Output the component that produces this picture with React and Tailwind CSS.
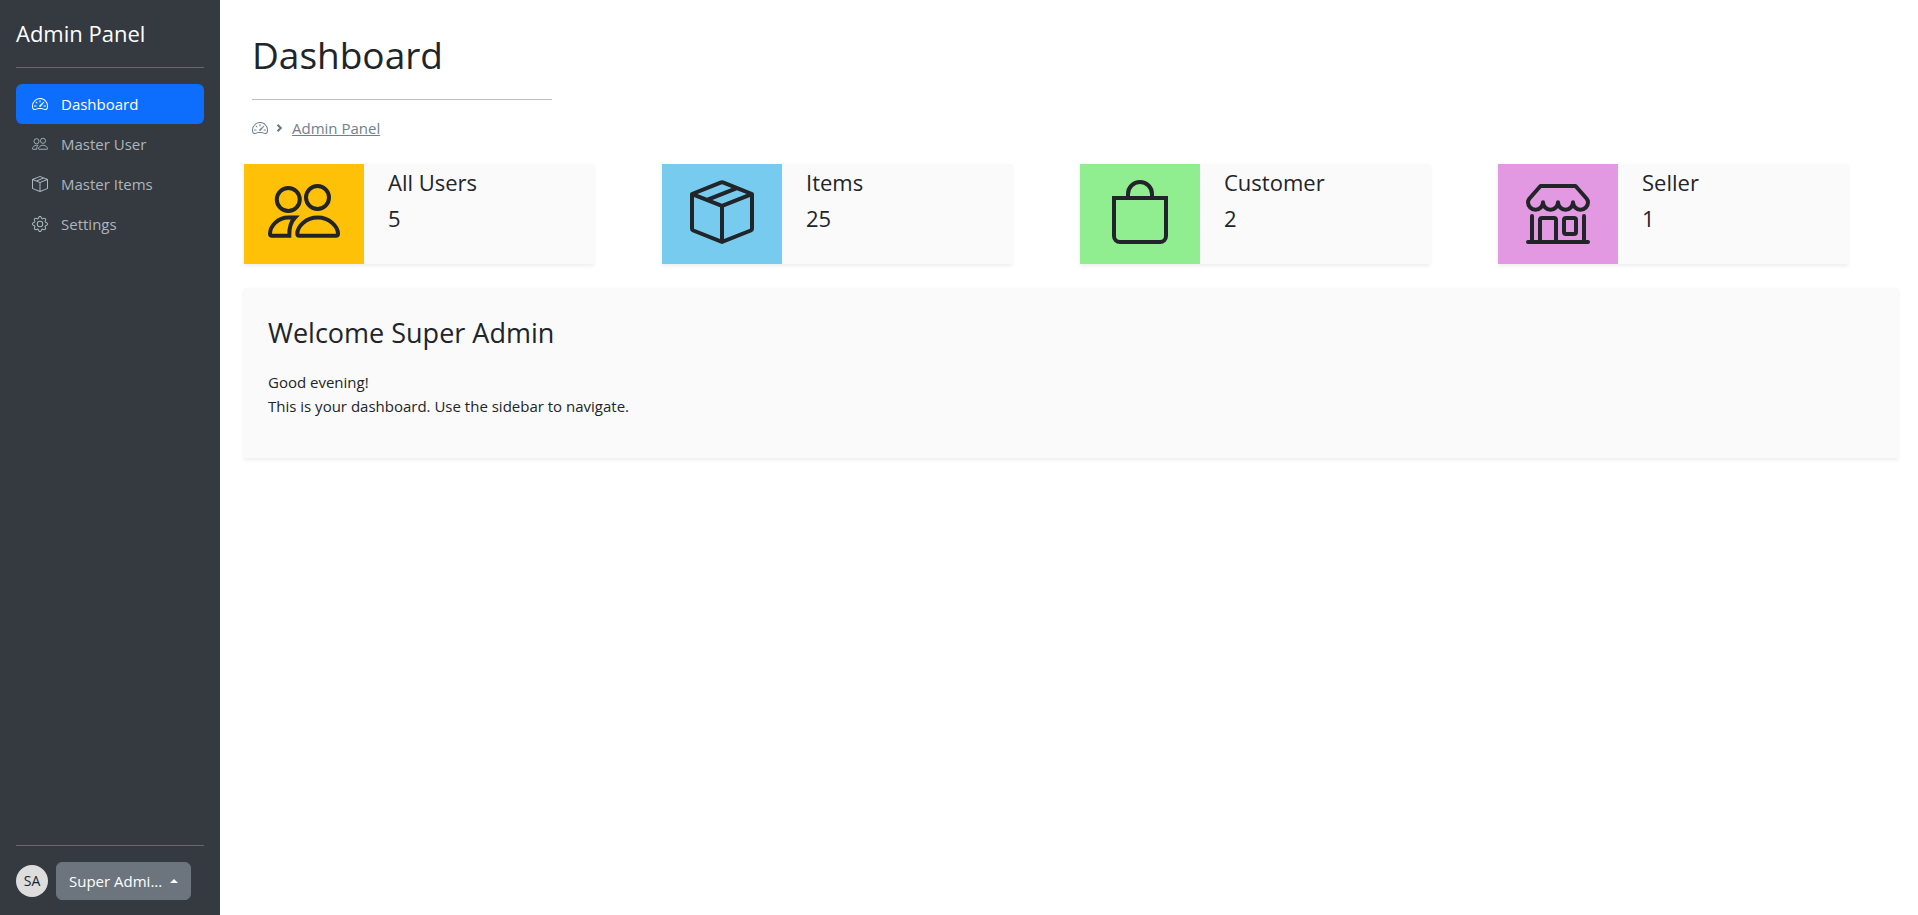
import { BsSpeedometer2, BsBoxSeam, BsGear, BsBag } from "react-icons/bs";

const NAV = [
  { label: "Dashboard", Icon: BsSpeedometer2, active: true },
  { label: "Master User", Icon: PeopleIcon },
  { label: "Master Items", Icon: BsBoxSeam },
  { label: "Settings", Icon: BsGear },
];

const STATS = [
  { label: "All Users", value: 5, Icon: PeopleIcon, tint: "bg-[#ffc107]", size: "size-[72px]" },
  { label: "Items", value: 25, Icon: BsBoxSeam, tint: "bg-[#76cbee]", size: "size-16" },
  { label: "Customer", value: 2, Icon: BsBag, tint: "bg-[#90ee90]", size: "size-16" },
  { label: "Seller", value: 1, Icon: ShopIcon, tint: "bg-[#e299e2]", size: "size-16" },
];

function PeopleIcon({ className }) {
  return (
    <svg viewBox="0 0 72 72" fill="none" stroke="currentColor" strokeWidth="4" className={className} aria-hidden="true">
      <circle cx="20.3" cy="23.5" r="11.5" />
      <circle cx="49.5" cy="21.5" r="11.5" />
      <path d="M31.3 59.7H68a2 2 0 0 0 2-2C70 50.500 61.500 41.500 49.600 41.500S29.300 50.500 29.300 57.700a2 2 0 0 0 2 2z" />
      <path d="M21.300 59.700H4a2 2 0 0 1-2-2C2 50.500 9.500 41.500 20.500 41.500H27C23 45.500 21 51 21.300 59.700z" />
    </svg>
  );
}

function ShopIcon({ className }) {
  return (
    <svg viewBox="0 0 64 64" fill="none" stroke="currentColor" strokeWidth="4" strokeLinecap="round" strokeLinejoin="round" className={className} aria-hidden="true">
      <path d="M14.500 6h35L60.500 18.500q1.500 2 1.500 3.700a7.500 7.500 0 0 1-15 0 7.500 7.500 0 0 1-15 0 7.500 7.500 0 0 1-15 0 7.500 7.500 0 0 1-15 0q0-1.700 1.500-3.700z" />
      <path d="M6 36v26M58 36v26M2 62h60M14 62V40a2 2 0 0 1 2-2h12a2 2 0 0 1 2 2v22" />
      <rect x="38" y="38" width="12" height="16" rx="2" />
    </svg>
  );
}

export default function App() {
  return (
    <div className="flex min-h-screen bg-white font-['Open_Sans','Noto_Sans',sans-serif] text-base text-[#212529]">
      <aside className="flex w-[220px] shrink-0 flex-col bg-[#343a40] px-4 pt-4 pb-[15px]">
        <a href="#" className="text-[22px] leading-[35px] text-white">Admin Panel</a>
        <hr className="my-4 border-[#67696c]" />
        <nav className="flex-1">
          <ul>
            {NAV.map(({ label, Icon, active }) => (
              <li key={label}>
                <a
                  href="#"
                  className={`flex items-center gap-[13px] rounded-md px-4 py-2 text-[15px] leading-6 ${active ? "bg-[#0d6efd] text-white" : "text-[#adb5bd]"}`}
                >
                  <Icon className="size-4" />
                  {label}
                </a>
              </li>
            ))}
          </ul>
        </nav>
        <hr className="my-4 border-[#67696c]" />
        <div className="flex items-center gap-2">
          <span className="flex size-8 items-center justify-center rounded-full bg-[#dddddd] text-sm">SA</span>
          <button type="button" className="flex items-center gap-2 rounded-md border border-[#6c757d] bg-[#6c757d] px-3 py-1.5 text-[15px] leading-6 text-white">
            Super Admi...
            <svg viewBox="0 0 8 4" className="h-1 w-2" fill="currentColor" aria-hidden="true">
              <path d="M4 0 8 4H0z" />
            </svg>
          </button>
        </div>
      </aside>

      <main className="min-w-0 flex-1 pt-[31px] pl-6">
        <header className="px-2">
          <h1 className="text-[37px] leading-12">Dashboard</h1>
          <hr className="mt-5 mb-4 w-[300px] border-[#bcbec0]" />
          <nav aria-label="Breadcrumb" className="flex items-center gap-2 text-[15px] leading-6 text-[#708090]">
            <a href="#" aria-label="Dashboard"><BsSpeedometer2 className="size-4" /></a>
            <svg viewBox="0 0 8 8" className="size-2 text-[#6c757d]" fill="none" stroke="currentColor" strokeWidth="2" aria-hidden="true">
              <path d="M1.500 0.700 4.800 4 1.500 7.300" />
            </svg>
            <a href="#" className="underline">Admin Panel</a>
          </nav>
        </header>

        <section className="mt-6 grid grid-cols-4 pr-0.5">
          {STATS.map(({ label, value, Icon, tint, size }) => (
            <div key={label} className="mr-[68px] flex h-[100px] bg-[#fafafa] shadow-[0_2px_4px_rgba(0,0,0,0.075)]">
              <div className={`flex w-[120px] shrink-0 items-center justify-center pb-1 ${tint}`}>
                <Icon className={size} />
              </div>
              <div className="px-6 text-[22px] leading-9">
                <p>{label}</p>
                <p>{value}</p>
              </div>
            </div>
          ))}
        </section>

        <section className="mt-6 mr-5 bg-[#fafafa] px-6 pt-6 pb-10 shadow-[0_2px_4px_rgba(0,0,0,0.075)]">
          <h2 className="text-[27px] leading-[42px]">Welcome Super Admin</h2>
          <p className="mt-4 text-[15px] leading-6">Good evening!<br />This is your dashboard. Use the sidebar to navigate.</p>
        </section>
      </main>
    </div>
  );
}
